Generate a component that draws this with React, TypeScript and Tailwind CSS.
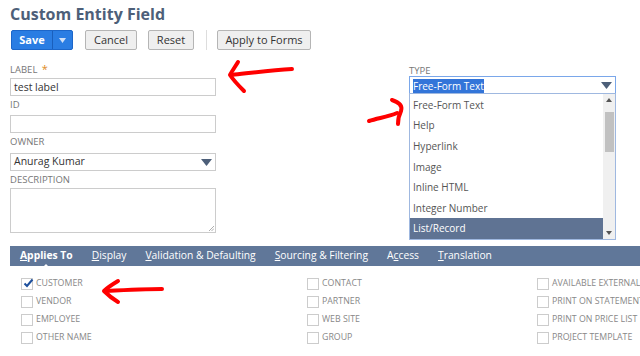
import React from "react";

const types = ["Free-Form Text", "Help", "Hyperlink", "Image", "Inline HTML", "Integer Number", "List/Record"];

const cols = [
  { x: "w-[286px]", items: [{ label: "CUSTOMER", checked: true }, { label: "VENDOR" }, { label: "EMPLOYEE" }, { label: "OTHER NAME" }] },
  { x: "w-[230px]", items: [{ label: "CONTACT" }, { label: "PARTNER" }, { label: "WEB SITE" }, { label: "GROUP" }] },
  { x: "w-[120px]", items: [{ label: "AVAILABLE EXTERNAL" }, { label: "PRINT ON STATEMENTS" }, { label: "PRINT ON PRICE LIST" }, { label: "PROJECT TEMPLATE" }] },
];

const tabs: { pre: string; key: string; post: string; bold?: boolean }[] = [
  { pre: "", key: "A", post: "pplies To", bold: true },
  { pre: "", key: "D", post: "isplay" },
  { pre: "", key: "V", post: "alidation & Defaulting" },
  { pre: "", key: "S", post: "ourcing & Filtering" },
  { pre: "A", key: "c", post: "cess" },
  { pre: "", key: "T", post: "ranslation" },
];

function Caret() {
  return (
    <svg width="11" height="7" viewBox="0 0 11 7" className="shrink-0">
      <path d="M0 0 H11 L5.5 7 Z" fill="#4d5f79" />
    </svg>
  );
}

function FieldLabel({ children }: { children: React.ReactNode }) {
  return <div className="text-[9.5px] text-[#777] leading-none h-[12px] pt-[1px]">{children}</div>;
}

export default function App() {
  return (
    <div className="relative w-[640px] h-[356px] overflow-hidden bg-white text-[#333]" style={{ fontFamily: '"Open Sans", sans-serif' }}>
      <div className="pl-[10px] pt-[3px]">
        <h1 className="text-[16px] font-bold text-[#4d5f79] leading-[22px]">Custom Entity Field</h1>

        {/* Buttons */}
        <div className="flex items-center mt-[5px] h-[20px] text-[11px]">
          <div className="flex h-[20px] ml-[1px] rounded-[2px] bg-[#2a7de3] border border-[#1c66c9] text-white">
            <span className="w-[40px] flex items-center justify-center font-bold">Save</span>
            <span className="w-[20px] flex items-center justify-center border-l border-[#1a5fbc]">
              <svg width="7" height="5" viewBox="0 0 7 5"><path d="M0 0 H7 L3.5 5 Z" fill="#cfe0f7" /></svg>
            </span>
          </div>
          <button className="ml-[12px] h-[20px] w-[52px] rounded-[2px] border border-[#b5b5b5] bg-[#efefef] text-[#333]">Cancel</button>
          <button className="ml-[11px] h-[20px] w-[46px] rounded-[2px] border border-[#b5b5b5] bg-[#efefef] text-[#333]">Reset</button>
          <div className="ml-[12px] w-px h-[20px] bg-[#ddd]" />
          <button className="ml-[10px] h-[20px] w-[94px] rounded-[2px] border border-[#b5b5b5] bg-[#efefef] text-[#333]">Apply to Forms</button>
        </div>

        {/* Form */}
        <div className="flex mt-[12px]">
          <div className="w-[206px] flex flex-col">
            <FieldLabel>
              LABEL <span className="text-[#e08a1e] text-[11px] ml-[2px]">*</span>
            </FieldLabel>
            <div className="mt-[4px] h-[18px] border border-[#ccc] text-[10.5px] leading-[16px] px-[3px]">test label</div>
            <div className="mt-[3px]"><FieldLabel>ID</FieldLabel></div>
            <div className="mt-[4px] h-[18px] border border-[#ccc]" />
            <div className="mt-[3px]"><FieldLabel>OWNER</FieldLabel></div>
            <div className="mt-[5px] h-[18px] border border-[#ccc] text-[10.5px] pl-[3px] pr-[3px] flex items-center justify-between">
              <span>Anurag Kumar</span>
              <Caret />
            </div>
            <div className="mt-[3px]"><FieldLabel>DESCRIPTION</FieldLabel></div>
            <div className="relative mt-[2px] h-[45px] border border-[#ccc]">
              <svg width="6" height="6" viewBox="0 0 6 6" className="absolute right-[1px] bottom-[1px]">
                <path d="M1 6 L6 1 M3.5 6 L6 3.5" stroke="#999" strokeWidth="0.8" />
              </svg>
            </div>
          </div>

          <div className="ml-[193px] w-[207px] flex flex-col pt-[3px]">
            <FieldLabel>TYPE</FieldLabel>
            <div className="relative -mt-[1px]">
              <div className="h-[19px] border border-[#7aa7ea] text-[10px] pl-[3px] pr-[3px] flex items-center justify-between">
                <span className="bg-[#3375d9] text-white leading-[14px]">Free-Form Text</span>
                <Caret />
              </div>
              {/* Dropdown list */}
              <div className="absolute left-0 top-[17px] w-[207px] h-[147px] border border-[#9fb8e0] bg-white flex z-10">
                <div className="flex-1 flex flex-col pt-[1px]">
                  {types.map((t) => (
                    <div
                      key={t}
                      className={`h-[20.6px] flex items-center pl-[3px] text-[10px] ${t === "List/Record" ? "bg-[#5f7393] text-white" : "text-[#555]"}`}
                    >
                      {t}
                    </div>
                  ))}
                </div>
                <div className="w-[12px] bg-[#f0f0f0] flex flex-col items-center justify-between py-[4px]">
                  <svg width="6" height="4" viewBox="0 0 6 4"><path d="M0 4 H6 L3 0 Z" fill="#555" /></svg>
                  <div className="w-[9px] h-[40px] bg-[#c1c1c1] mt-[10px] mb-auto" />
                  <svg width="6" height="4" viewBox="0 0 6 4"><path d="M0 0 H6 L3 4 Z" fill="#555" /></svg>
                </div>
              </div>
            </div>
          </div>
        </div>

        {/* Tabs */}
        <div className="relative mt-[13px] h-[20px] bg-[#607799] flex items-center text-white text-[10.3px] pl-[10px]">
          {tabs.map((t, i) => (
            <span key={i} className={`${t.bold ? "font-bold" : ""} ${i === 0 ? "" : "ml-[19px]"} relative`}>
              {t.pre}
              <span className="underline underline-offset-[1px]">{t.key}</span>
              {t.post}
              {i === 0 && (
                <svg width="8" height="4" viewBox="0 0 8 4" className="absolute left-1/2 -translate-x-1/2 bottom-[-4px]">
                  <path d="M0 4 L4 0 L8 4 Z" fill="#fff" />
                </svg>
              )}
            </span>
          ))}
        </div>

        {/* Checkboxes */}
        <div className="flex pl-[11px] mt-[12px]">
          {cols.map((c, ci) => (
            <div key={ci} className={`${c.x} shrink-0 flex flex-col gap-[6px]`}>
              {c.items.map((it) => (
                <div key={it.label} className="flex items-center h-[12px] whitespace-nowrap">
                  <span className="relative w-[12px] h-[12px] border border-[#ccc] bg-white shrink-0">
                    {it.checked && (
                      <svg width="11" height="10" viewBox="0 0 11 10" className="absolute left-[1px] top-[-1px]">
                        <path d="M1.5 5.5 L4 8 L9.5 1.5" stroke="#1d4f9c" strokeWidth="2" fill="none" />
                      </svg>
                    )}
                  </span>
                  <span className="ml-[3px] text-[8.8px] text-[#888]">{it.label}</span>
                </div>
              ))}
            </div>
          ))}
        </div>
      </div>

      {/* Red annotation arrows */}
      <svg width="640" height="356" viewBox="0 0 640 356" className="absolute inset-0 pointer-events-none" fill="none" stroke="#f00" strokeWidth="4" strokeLinecap="round" strokeLinejoin="round">
        <path d="M292 69 C270 70 250 73 232 75" />
        <path d="M238 62 C235 67 232 71 230 75 C234 81 239 86 244 91" />
        <path d="M369 121 C378 118 388 117 397 113" />
        <path d="M392 100 C398 102 403 105 401 111 C399 115 398 119 398 124" />
        <path d="M162 289 C145 289 125 290 106 291" />
        <path d="M118 281 C113 284 108 287 104 291 C108 295 113 299 118 302" />
      </svg>
    </div>
  );
}
